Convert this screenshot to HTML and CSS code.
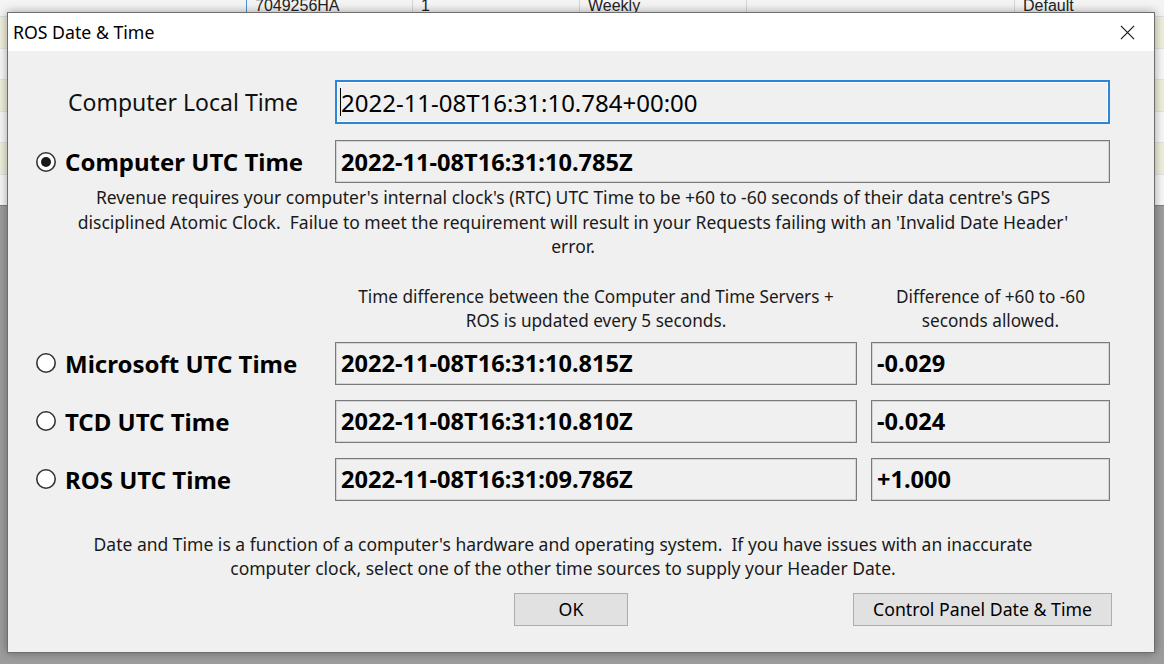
FILE: index.html
```html
<!DOCTYPE html>
<html lang="en">
<head>
    <meta charset="UTF-8">
    <title>ROS Date &amp; Time</title>
    <link rel="stylesheet" href="styles.css">
</head>
<body>
    <!-- grid of the main window behind the dialog -->
    <div class="backdrop">
        <div class="grid-row head">
            <span class="cell c1"></span>
            <span class="cell c2">7049256HA</span>
            <span class="cell c3">1</span>
            <span class="cell c4">Weekly</span>
            <span class="cell c5"></span>
            <span class="cell c6">Default</span>
        </div>
        <div class="grid-row tint"></div>
        <div class="grid-row light"></div>
        <div class="grid-row tint"></div>
        <div class="grid-row light"></div>
        <div class="grid-row tint"></div>
        <div class="grid-row light last"></div>
        <div class="shade"></div>
    </div>

    <div class="dialog">
        <div class="titlebar">
            <span class="title">ROS Date &amp; Time</span>
            <svg class="close" width="16" height="16" viewBox="0 0 16 16">
                <path d="M1 1 L15 15 M15 1 L1 15" stroke="#1a1a1a" stroke-width="1.3" fill="none"/>
            </svg>
        </div>

        <div class="content">
            <div class="top-row">
                <div class="side plain">Computer Local Time</div>
                <div class="field focus"><span class="caret"></span>2022-11-08T16:31:10.784+00:00</div>
            </div>
            <div class="top-row second">
                <div class="side">
                    <svg class="radio" width="22" height="22" viewBox="0 0 22 22">
                        <circle cx="11" cy="11" r="9.2" fill="#fff" stroke="#333" stroke-width="1.6"/>
                        <circle cx="11" cy="11" r="5" fill="#1a1a1a"/>
                    </svg>
                    <span class="src-label">Computer UTC Time</span>
                </div>
                <div class="field bold">2022-11-08T16:31:10.785Z</div>
            </div>

            <p class="notice">Revenue requires your computer's internal clock's (RTC) UTC Time to be +60 to -60 seconds of their data centre's GPS<br>
                disciplined Atomic Clock.&nbsp; Failue to meet the requirement will result in your Requests failing with an 'Invalid Date Header'<br>
                error.</p>

            <div class="sources heads">
                <div></div>
                <div class="col-head">Time difference between the Computer and Time Servers +<br>ROS is updated every 5 seconds.</div>
                <div class="col-head">Difference of +60 to -60<br>seconds allowed.</div>
            </div>

            <div class="sources">
                <div class="side">
                    <svg class="radio" width="22" height="22" viewBox="0 0 22 22">
                        <circle cx="11" cy="11" r="9.2" fill="#fff" stroke="#333" stroke-width="1.6"/>
                    </svg>
                    <span class="src-label">Microsoft UTC Time</span>
                </div>
                <div class="field bold">2022-11-08T16:31:10.815Z</div>
                <div class="field bold">-0.029</div>

                <div class="side">
                    <svg class="radio" width="22" height="22" viewBox="0 0 22 22">
                        <circle cx="11" cy="11" r="9.2" fill="#fff" stroke="#333" stroke-width="1.6"/>
                    </svg>
                    <span class="src-label">TCD UTC Time</span>
                </div>
                <div class="field bold">2022-11-08T16:31:10.810Z</div>
                <div class="field bold">-0.024</div>

                <div class="side">
                    <svg class="radio" width="22" height="22" viewBox="0 0 22 22">
                        <circle cx="11" cy="11" r="9.2" fill="#fff" stroke="#333" stroke-width="1.6"/>
                    </svg>
                    <span class="src-label">ROS UTC Time</span>
                </div>
                <div class="field bold">2022-11-08T16:31:09.786Z</div>
                <div class="field bold">+1.000</div>
            </div>

            <p class="notice bottom">Date and Time is a function of a computer's hardware and operating system.&nbsp; If you have issues with an inaccurate<br>
                computer clock, select one of the other time sources to supply your Header Date.</p>

            <div class="buttons">
                <button class="btn ok">OK</button>
                <button class="btn cp">Control Panel Date &amp; Time</button>
            </div>
        </div>
    </div>
</body>
</html>
```

FILE: styles.css
```css
body {
    margin: 0;
    width: 1164px;
    height: 664px;
    overflow: hidden;
    position: relative;
    font-family: "Noto Sans", "Open Sans", sans-serif;
    background-color: #9c9c9c;
}

/* main window behind */
.backdrop {
    height: 100%;
    display: flex;
    flex-direction: column;
}

.grid-row {
    height: 31.5px;
    flex-shrink: 0;
    border-bottom: 1px solid #e2e2e2;
    box-sizing: border-box;
}

.grid-row.head {
    height: 17px;
    display: flex;
    align-items: flex-end;
    background-color: #f4f4f4;
    font-family: "Liberation Sans", Arial, sans-serif;
    font-size: 16px;
    line-height: 12px;
    color: #222;
    overflow: hidden;
    border-bottom: 1px solid #dcdcdc;
}

.cell {
    height: 17px;
    box-sizing: border-box;
    padding: 1px 0 0 8px;
    border-left: 1px solid #d6d6d6;
}

.c1 { width: 246px; border-left: none; }
.c2 { width: 166px; border-left: 1px solid #4a90d9; }
.c3 { width: 167px; }
.c4 { width: 167px; }
.c5 { width: 268px; }
.c6 { flex: 1; }

.grid-row.light {
    background-color: #f7f7f7;
}

.grid-row.tint {
    background-color: #eeeedb;
}

.grid-row.last {
    border-bottom: 1px solid #3e8fe0;
}

.shade {
    flex: 1;
    background-color: #9d9d9d;
}

/* dialog */
.dialog {
    position: absolute;
    left: 7px;
    top: 12px;
    width: 1148px;
    height: 641px;
    box-sizing: border-box;
    border: 1px solid #6e6e6e;
    background-color: #f0f0f0;
    box-shadow: 0 0 9px rgba(0, 0, 0, 0.35);
    display: flex;
    flex-direction: column;
}

.titlebar {
    height: 38px;
    background-color: #fff;
    display: flex;
    align-items: center;
    justify-content: space-between;
    padding: 0 19px 0 5px;
    flex-shrink: 0;
}

.title {
    font-size: 17.7px;
    color: #000;
    margin-top: -1px;
}

.close {
    width: 15px;
    height: 15px;
}

.content {
    padding-top: 29px;
    color: #000;
}

.top-row {
    display: flex;
    align-items: center;
    height: 44px;
    width: 1102px;
}

.top-row.second {
    margin-top: 16px;
    height: 43px;
}

.side {
    width: 327px;
    flex-shrink: 0;
    box-sizing: border-box;
    padding-left: 27px;
    display: flex;
    align-items: center;
    gap: 8px;
    font-size: 24px;
}

.sources .side {
    width: auto;
}

.side.plain {
    padding-left: 60px;
    font-size: 23px;
    color: #111;
}

.src-label {
    font-weight: bold;
    white-space: nowrap;
}

.radio {
    flex-shrink: 0;
}

.field {
    flex: 1;
    height: 100%;
    box-sizing: border-box;
    border: 1px solid #7a7a7a;
    box-shadow: inset 0 0 0 1px #d4d4d4;
    display: flex;
    align-items: center;
    padding-left: 5px;
    font-size: 24px;
    white-space: nowrap;
}

.field.focus {
    border: 2px solid #2b86d8;
    box-shadow: inset 0 0 0 1px #fff;
    padding-left: 3px;
}

.field.bold {
    font-weight: bold;
    font-size: 23.6px;
}

.caret {
    width: 1px;
    height: 28px;
    background-color: #000;
}

.notice {
    margin: 2px 16px 0 0;
    text-align: center;
    font-size: 17.5px;
    line-height: 24.5px;
    color: #1a1a1a;
}

.notice.bottom {
    margin: 31px 36px 0 0;
    line-height: 24px;
}

.sources {
    display: grid;
    grid-template-columns: 313px 522px 239px;
    grid-auto-rows: 43px;
    column-gap: 14px;
    row-gap: 15px;
}

.sources.heads {
    grid-auto-rows: auto;
    margin: 26px 0 9px 0;
}

.col-head {
    text-align: center;
    font-size: 17.2px;
    line-height: 24px;
    color: #1a1a1a;
    white-space: nowrap;
}

.buttons {
    display: flex;
    justify-content: space-between;
    padding: 0 42px 0 506px;
    margin-top: 13px;
}

.btn {
    height: 33px;
    box-sizing: border-box;
    border: 1px solid #adadad;
    background-color: #e1e1e1;
    font-family: "Noto Sans", "Open Sans", sans-serif;
    font-size: 17.7px;
    color: #000;
    padding: 0;
}

.btn.ok {
    width: 114px;
}

.btn.cp {
    width: 259px;
}
```
